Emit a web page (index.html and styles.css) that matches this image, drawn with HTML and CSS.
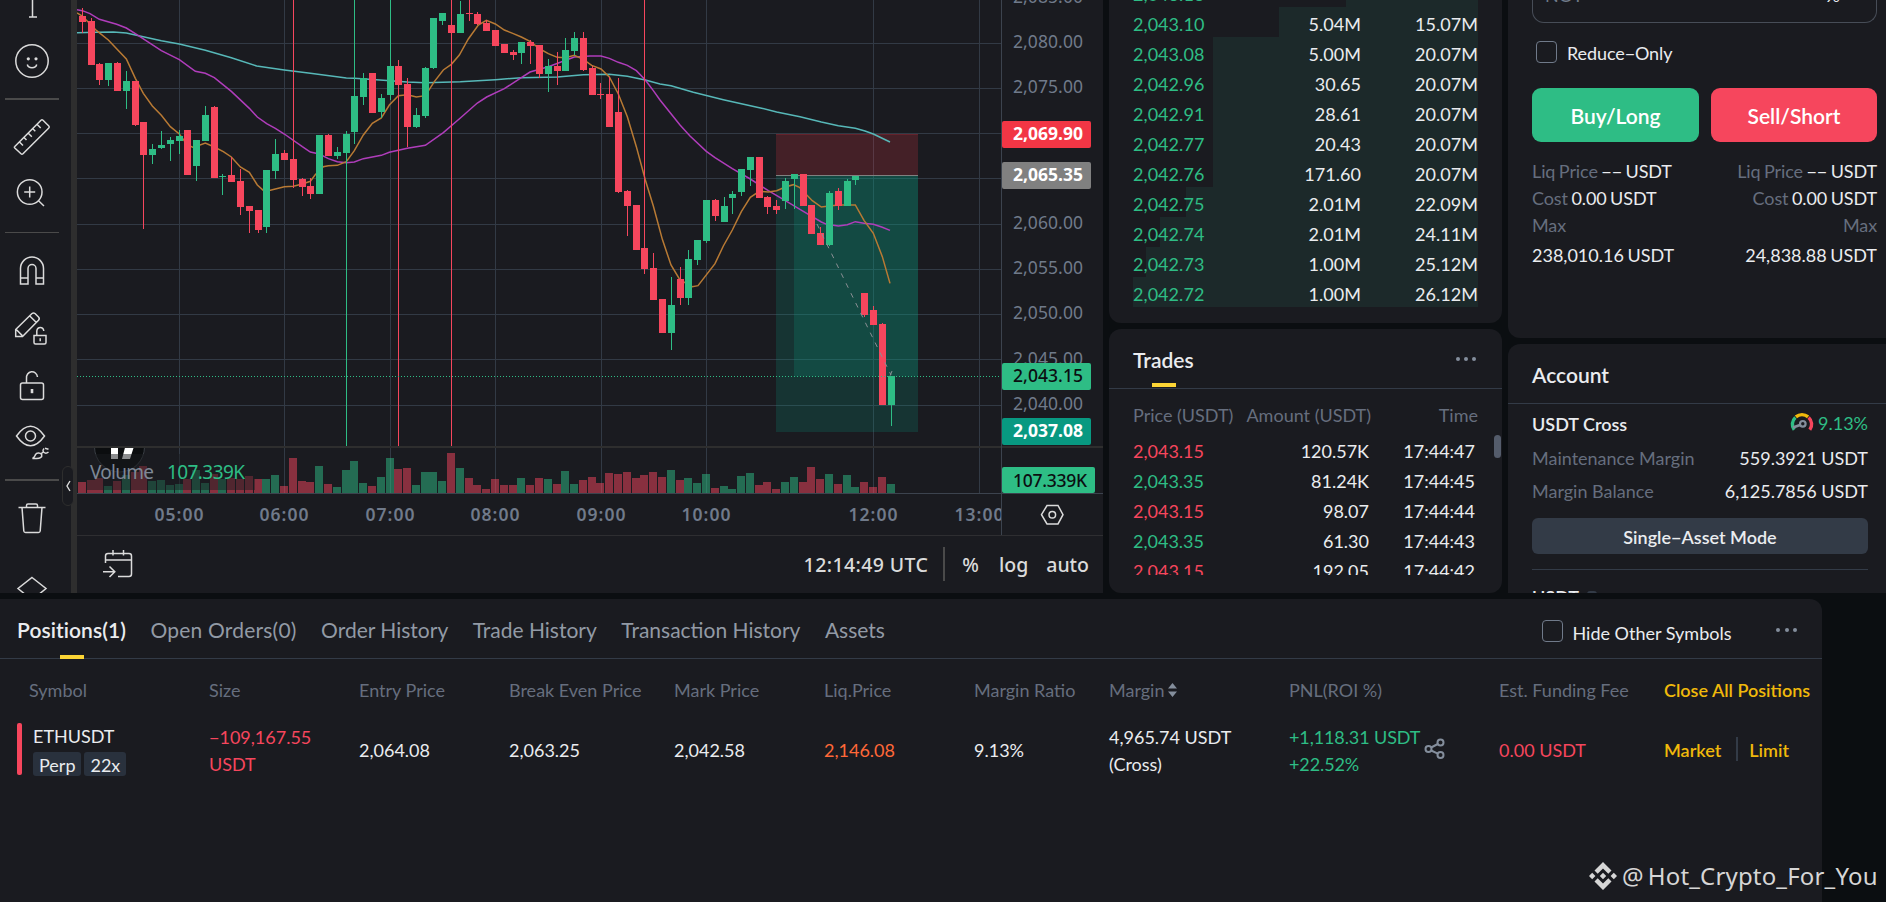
FILE: index.html
```html
<!DOCTYPE html>
<html lang="en">
<head>
  <meta charset="utf-8">
  <title>ETHUSDT Perp</title>
  <link rel="stylesheet" href="styles.css">
</head>
<body>

  <main class="terminal">
    <section class="chart-panel">
      <nav class="tools">
        <svg class="tool tool-top" width="40" height="33" viewBox="12 0 40 33"><path d="M32.500 0V17M29 17h8"/></svg>
        <svg class="tool" width="40" height="40" viewBox="12 41 40 40"><circle cx="32" cy="61" r="16.200"/><path d="M27.300 64.500c1 4.300 8.400 4.300 9.400 0"/><circle class="dot" cx="28.300" cy="58.800" r="1.600"/><circle class="dot" cx="36" cy="58.800" r="1.600"/></svg>
        <hr class="thick">
        <svg class="tool" width="40" height="40" viewBox="12 117 40 40"><path d="M14.800 146.500 41 120.200q1-1 2 0l5.800 5.800q1 1 0 2L23 153.800q-1 1-2 0l-6.200-5.800q-.8-.8 0-1.500zM19.500 142l3.500 3.500M24 137.500l2.500 2.500M28.300 133.200l3.500 3.500M32.800 128.700l2.500 2.500M37.200 124.500l3.500 3.500"/></svg>
        <svg class="tool" width="40" height="40" viewBox="12 172 40 40"><circle cx="29.700" cy="192" r="12.300"/><path d="M29.700 186.500v11M24.200 192h11M38.300 200.500l5.700 5.500"/></svg>
        <hr>
        <svg class="tool" width="40" height="40" viewBox="12 250 40 40"><path d="M20.500 284V268.500a11.500 11.500 0 0 1 23 0V284h-7.500V268.500a4 4 0 0 0-8 0V284zM20.500 278H28M36 278h7.500"/></svg>
        <svg class="tool" width="40" height="40" viewBox="12 309 40 40"><path d="M15.700 329.500 32 313.500q1.500-1.200 3 0l3.500 3.500q1.500 1.500 0 3.200L22.500 336.500H15.700zM16.500 329.800l5.800 5.800M29.800 316l6.300 6.300M34 335.500h12v7q0 1.500-1.500 1.500h-9q-1.500 0-1.500-1.500zM36.800 335v-4q.5-3.500 3.500-3.500t3.500 3.500M40.200 338.300v3"/></svg>
        <svg class="tool" width="40" height="40" viewBox="12 366 40 40"><rect x="20.500" y="383" width="23" height="16.500" rx="2"/><path d="M26.500 383v-4.500a5.500 6 0 0 1 11-1.500"/><path d="M32 389v4.200" class="bold"/></svg>
        <svg class="tool" width="40" height="40" viewBox="12 422 40 40"><path d="M16.500 436Q30.500 416.500 44.500 436 30.500 455.500 16.500 436zM32.500 458.500c2-1 2.200-2.200 3-3.800 1-2 4.500-2.300 6.200-.2.800 3-2.200 4-5 4zM41.500 453.500l2-2M44 448.500q-2 2.500 0 4t4.500-.5M45 448.300l3.500 1"/><circle cx="30.500" cy="436" r="5"/></svg>
        <hr class="thick">
        <svg class="tool" width="40" height="40" viewBox="12 498 40 40"><path d="M18.500 507.500h27M26.500 507.500v-2q0-1.500 1.500-1.500h8q1.500 0 1.500 1.500v2M22 507.500l1.800 23.500q.2 1.500 1.700 1.500h13q1.500 0 1.700-1.500l1.800-23.500"/></svg>
        <svg class="tool" width="40" height="40" viewBox="12 571 40 40"><path d="M32 577.500 46 588.500 32 600 18 588.500z"/></svg>
      </nav>
      <div class="splitter"><span class="handle"><svg width="6" height="12" viewBox="0 0 6 12"><path d="M5 1 2 6l3 5"/></svg></span></div>
      <div class="chart">
        <svg id="chart" width="1026" height="536" viewBox="77 0 1026 536"></svg>
        <div class="chart-bar">
          <svg class="tool goto" width="32" height="32" viewBox="102 547 32 32"><path d="M105.500 563v-7q0-2.500 2.500-2.500h21q2.500 0 2.500 2.500v18q0 2.500-2.500 2.500h-11M105.500 560h26M113 550v5.500M123.500 550v5.500M103 571.700h12M109.500 566.500l5.300 5.200-5.300 5.300"/></svg>
          <span class="clock">12:14:49 UTC</span>
          <span class="bar-sep"></span>
          <span class="pct">%</span>
          <span class="log">log</span>
          <span class="auto">auto</span>
        </div>
      </div>
    </section>

    <div class="col">
      <section class="card book" id="book"></section>
      <section class="card trades">
        <header class="card-head">
          <h2>Trades</h2>
          <span class="dots"><i></i><i></i><i></i></span>
        </header>
        <div class="trade-row trade-labels"><span>Price (USDT)</span><span>Amount (USDT)</span><span>Time</span></div>
        <div class="trade-list">
          <div class="trade-row"><span class="down">2,043.15</span><span>120.57K</span><span>17:44:47</span></div>
          <div class="trade-row"><span class="up">2,043.35</span><span>81.24K</span><span>17:44:45</span></div>
          <div class="trade-row"><span class="down">2,043.15</span><span>98.07</span><span>17:44:44</span></div>
          <div class="trade-row"><span class="up">2,043.35</span><span>61.30</span><span>17:44:43</span></div>
          <div class="trade-row"><span class="down">2,043.15</span><span>192.05</span><span>17:44:42</span></div>
        </div>
        <span class="thumb"></span>
      </section>
    </div>

    <div class="col">
      <section class="card order">
        <div class="field"><span>NOT</span><span class="unit">%</span></div>
        <label class="check reduce"><span class="box"></span>Reduce−Only</label>
        <div class="buttons">
          <button class="buy">Buy/Long</button>
          <button class="sell">Sell/Short</button>
        </div>
        <div class="estimates">
          <div>
            <p><em>Liq Price</em> −− USDT</p>
            <p><em>Cost</em> 0.00 USDT</p>
            <p><em>Max</em></p>
            <p class="max">238,010.16 USDT</p>
          </div>
          <div class="right">
            <p><em>Liq Price</em> −− USDT</p>
            <p><em>Cost</em> 0.00 USDT</p>
            <p><em>Max</em></p>
            <p class="max">24,838.88 USDT</p>
          </div>
        </div>
      </section>
      <section class="card account">
        <header class="card-head"><h2>Account</h2></header>
        <div class="account-body">
          <div class="line first"><b>USDT Cross</b>
            <span class="ratio"><svg width="24" height="22" viewBox="0 0 24 22"><path d="M4.200 17.800A9.300 9.300 0 0 1 5.400 5.400" stroke="#2ebd85"/><path d="M5.900 4.900a9.300 9.300 0 0 1 12.200 0" stroke="#f0b90b"/><path d="M18.600 5.400a9.300 9.300 0 0 1 1.200 12.400" stroke="#f6465d"/><circle cx="12.800" cy="11.800" r="2.800" stroke="#848e9c" stroke-width="2.200"/><path d="M10 13 3 15.500" stroke="#848e9c" stroke-width="2.800"/></svg>9.13%</span></div>
          <div class="line"><em>Maintenance Margin</em><span>559.3921 USDT</span></div>
          <div class="line"><em>Margin Balance</em><span>6,125.7856 USDT</span></div>
          <button class="mode">Single−Asset Mode</button>
          <div class="asset"><b>USDT</b><i></i></div>
        </div>
      </section>
    </div>
  </main>

  <section class="positions">
    <header class="tabs">
      <a class="active">Positions(1)</a>
      <a class="open">Open Orders(0)</a>
      <a>Order History</a>
      <a>Trade History</a>
      <a>Transaction History</a>
      <a>Assets</a>
      <label class="check hide"><span class="box"></span>Hide Other Symbols</label>
      <span class="dots"><i></i><i></i><i></i></span>
    </header>
    <div class="pos-grid pos-labels">
      <span>Symbol</span><span>Size</span><span>Entry Price</span><span>Break Even Price</span><span>Mark Price</span><span>Liq.Price</span><span>Margin Ratio</span>
      <span>Margin <svg width="9" height="14" viewBox="0 0 9 14"><path d="M4.500 0 9 5.500H0zM4.500 14 9 8.500H0z" fill="#848e9c"/></svg></span>
      <span>PNL(ROI %)</span><span>Est. Funding Fee</span><a>Close All Positions</a>
    </div>
    <div class="pos-grid pos-row">
      <div class="symbol"><span>ETHUSDT</span><div class="badges"><i>Perp</i><i>22x</i></div></div>
      <span class="down">−109,167.55<br>USDT</span>
      <span>2,064.08</span>
      <span>2,063.25</span>
      <span>2,042.58</span>
      <span class="warn">2,146.08</span>
      <span>9.13%</span>
      <span>4,965.74 USDT<br>(Cross)</span>
      <div class="pnl up"><span>+1,118.31 USDT<br>+22.52%</span>
        <svg width="22" height="22" viewBox="0 0 22 22"><circle cx="4.500" cy="11" r="3"/><circle cx="16.500" cy="4.500" r="3"/><circle cx="16.500" cy="17" r="3"/><path d="M7.200 9.500 13.800 6M7.200 12.500l6.600 3.200"/></svg></div>
      <span class="down">0.00 USDT</span>
      <div class="close"><a>Market</a><a>Limit</a></div>
    </div>
  </section>

  <div class="watermark">
    <svg width="28" height="28" viewBox="0 0 28 28"><path d="M14 0l8.500 8.500-3.200 3.200L14 6.400l-5.300 5.300-3.200-3.200zM3.200 10.800 6.400 14l-3.200 3.200L0 14zM24.800 10.800 28 14l-3.200 3.200L21.600 14zM14 10.800l3.200 3.200-3.200 3.200-3.200-3.200zM8.700 16.300l5.300 5.300 5.300-5.300 3.200 3.200L14 28l-8.500-8.500z"/></svg>
    <span>@</span><span class="handle-name">Hot_Crypto_For_You</span>
  </div>

  <script src="chart.js"></script>
</body>
</html>
```

FILE: styles.css
```css
* { box-sizing: border-box; }
body { margin: 0; height: 902px; overflow: hidden; background: #0b0e11; color: #eaecef; font: 18px/27px Lato, "Open Sans", sans-serif; position: relative; }
h2, p { margin: 0; }
em, i { font-style: normal; }
em { color: #666e7e; }
button { border: 0; padding: 0; font-family: inherit; color: #fff; }
.up { color: #2ebd85; }
.down { color: #f6465d; }

.terminal { display: grid; grid-template-columns: 1103px 393px 378px; gap: 6px; height: 593px; }
.col { display: flex; flex-direction: column; gap: 6px; height: 593px; }
.card { background: #1a1b20; border-radius: 12px; overflow: hidden; position: relative; }

/* chart */
.chart-panel { display: flex; background: #1a1b20; height: 593px; overflow: hidden; }
.tools { width: 71px; padding-right: 7px; display: grid; grid-template-rows: 33px 56px 20px 56px 54px 26px 50px 68px 46px 66px 10px 66px 80px; place-items: center; height: 593px; }
.tools hr { width: 54px; height: 1px; margin: 0; border: 0; background: #4a4a4a; }
.tools hr.thick { height: 2px; }
.tool { fill: none; stroke: #dbdbdb; stroke-width: 1.5; }
.tool .dot { fill: #dbdbdb; stroke: none; }
.tool .bold { stroke-width: 2.6; }
.splitter { width: 6px; background: #2e2e2e; position: relative; }
.handle { position: absolute; left: -9px; top: 466px; width: 12px; height: 40px; border: 1px solid #2e2e2e; border-radius: 6px; background: #1a1b20; display: flex; align-items: center; justify-content: center; }
.handle svg { fill: none; stroke: #dbdbdb; stroke-width: 1.4; flex: none; }
.chart { width: 1026px; }
.chart > svg { display: block; }
.chart text { font-family: "Noto Sans", sans-serif; font-size: 17.5px; fill: #707a8a; }
.chart-bar { height: 57px; padding: 0 15px 9px 25px; display: flex; align-items: center; font: 500 19.5px/24px "Noto Sans", sans-serif; color: #dbdbdb; }
.goto { margin-right: auto; margin-top: 5px; }
.bar-sep { width: 2px; height: 34px; background: #4a4a4a; margin: 7px 17px 0 15px; }
.clock { letter-spacing: 0.4px; }
.pct { margin-right: 20px; }
.log { margin-right: 18px; }
.auto { margin-right: -1px; }
.chart-bar span:not(.bar-sep) { margin-top: 9px; }

/* order book */
.book { height: 323px; padding: 0 24px 16px; border-radius: 0 0 12px 12px; display: flex; flex-direction: column; justify-content: flex-end; }
.book-row { flex: none; height: 30px; padding-top: 2px; line-height: 30px; position: relative; display: grid; grid-template-columns: 110px 118px 117px; text-align: right; }
.book-row span { position: relative; z-index: 1; letter-spacing: 0.05px; }
.book-row span:first-child { text-align: left; color: #2ebd85; }
.depth { position: absolute; right: 0; top: 0; height: 30px; background: #1c292a; }

/* trades */
.card-head { display: flex; align-items: center; justify-content: space-between; padding: 1px 24px 0; height: 60px; border-bottom: 1px solid #333b47; }
.card-head h2 { font-size: 21px; font-weight: 600; position: relative; }
.trades { height: 264px; }
.trades h2::after { content: ""; position: absolute; left: 19px; top: 37px; width: 24px; height: 4px; background: #fcd535; }
.dots { display: flex; gap: 4px; }
.dots i { width: 4px; height: 4px; border-radius: 50%; background: #848e9c; }
.trades .dots { padding-right: 2px; }
.trade-row { display: grid; grid-template-columns: 110px 126px 106px; height: 30px; line-height: 30px; text-align: right; padding-left: 24px; }
.trade-row span:first-child { text-align: left; }
.trade-labels { margin: 12px 0 5px; line-height: 29px; grid-template-columns: 106px 132px 107px; color: #666e7e; white-space: nowrap; }
.trade-list { height: 139px; overflow: hidden; }
.thumb { position: absolute; right: 1px; top: 106px; width: 7px; height: 23px; border-radius: 4px; background: #545c6b; }

/* order form */
.order { height: 338px; border-radius: 0 0 0 12px; padding: 0 9px 0 24px; }
.field { height: 23px; border: 1px solid #474d57; border-top: 0; border-radius: 0 0 12px 12px; display: flex; justify-content: space-between; padding: 0 36px 0 12px; line-height: 24px; color: #707a8a; overflow: hidden; }
.field span { margin-top: -17.5px; }
.field .unit { color: #eaecef; }
.check { display: flex; align-items: center; color: #eaecef; }
.box { width: 21px; height: 22px; border: 1px solid #707a8a; border-radius: 4px; }
.reduce { margin: 18px 0 0 4px; height: 24px; gap: 10px; line-height: 26px; letter-spacing: -0.1px; }
.check .box { position: relative; top: -1px; }
.buttons { display: grid; grid-template-columns: 167px 166px; gap: 12px; margin-top: 23px; }
.buttons button { height: 54px; border-radius: 9px; font-size: 21px; font-weight: 600; }
.buy { background: #2ebd85; }
.sell { background: #f6465d; }
.estimates { display: flex; justify-content: space-between; margin-top: 16px; letter-spacing: -0.1px; word-spacing: -1px; }
.estimates .right { text-align: right; }
.estimates .max { margin-top: 3px; letter-spacing: 0; }

/* account */
.account { height: 249px; border-radius: 12px 0 0 0; }
.account-body { padding: 1px 18px 0 24px; }
.line { display: flex; justify-content: space-between; height: 33px; line-height: 34px; }
.line.first { height: 36px; line-height: 38px; }
.line b, .asset b { font-weight: 600; }
.ratio { display: flex; align-items: center; gap: 4px; color: #2ebd85; }
.ratio svg { fill: none; stroke-width: 3.4; }
.mode { width: 336px; height: 36px; margin-top: 11px; border-radius: 6px; background: #333b47; color: #eaecef; font-size: 18px; font-weight: 600; line-height: 38px; display: block; }
.asset { margin-top: 15px; padding-top: 14px; border-top: 1px solid #333b47; display: flex; align-items: center; gap: 8px; }
.asset i { width: 10px; height: 14px; border-radius: 3px; background: #333b47; }

/* positions */
.positions { width: 1822px; height: 303px; margin-top: 6px; background: #1a1b20; border-radius: 0 12px 0 0; }
.tabs { height: 60px; border-bottom: 1px solid #333b47; padding-left: 17px; display: flex; align-items: center; gap: 24.5px; font-size: 21px; color: #929aa5; padding-top: 2px; }
.tabs a { position: relative; }
.tabs .active { color: #eaecef; font-weight: 600; letter-spacing: 0.08px; }
.tabs .active::after { content: ""; position: absolute; left: 43px; top: 39px; width: 24px; height: 4px; background: #fcd535; }
.tabs .open { letter-spacing: 0.2px; }
.hide { margin: 7px 0 0 auto; gap: 10px; font-size: 18px; }
.hide .box { top: -2px; }
.tabs .dots { margin: 0 25px 0 20px; gap: 4.5px; }
.pos-grid { display: grid; grid-template-columns: 180px 150px 150px 165px 150px 150px 135px 180px 210px 165px 150px; padding-left: 29px; align-items: center; white-space: nowrap; }
.pos-labels { color: #666e7e; height: 64px; padding-bottom: 2px; }
.pos-labels svg { margin-left: -1px; }
.pos-grid a { color: #f0b90b; font-weight: 600; }
.pos-row { height: 56px; padding-bottom: 2px; }
.symbol { position: relative; padding-left: 4px; height: 55px; display: flex; flex-direction: column; gap: 2px; }
.symbol::before { content: ""; position: absolute; left: -12px; top: 0; width: 5px; height: 52px; border-radius: 2px; background: #f6465d; }
.badges { display: flex; gap: 3px; }
.badges i { height: 24px; line-height: 27px; padding: 0 6px; border-radius: 3px; background: #29313d; }
.warn { color: #ff6838; }
.pnl { display: flex; align-items: center; gap: 4px; letter-spacing: -0.1px; }
.pnl svg { fill: none; stroke: #848e9c; stroke-width: 2; margin-top: -3px; }
.close { display: flex; }
.close a + a { margin-left: 15px; padding-left: 11px; border-left: 2px solid #333b47; height: 24px; }

.watermark { position: absolute; left: 1589px; top: 858px; display: flex; align-items: center; height: 36px; font: 24px/36px "Noto Sans", sans-serif; color: #d6d6d6; letter-spacing: 0.17px; }
.watermark svg { fill: #d6d6d6; margin-right: 5px; }
.handle-name { margin-left: 4px; white-space: nowrap; }
```

FILE: chart.js
```js
// chart data is kept in thirds of a pixel
const U = 3;
const UP = '#2ebd85', DOWN = '#f6465d', GRID = '#323a45';

// [up, high, top, bottom, low, volume top]
const candles = [
  [0,24,48,66,99,576],[0,54,63,195,195,570],[0,189,192,240,255,564],[1,189,189,240,258,588],[0,186,189,273,273,573],
  [1,213,243,273,327,555],[0,243,243,375,378,546],[0,366,366,465,687,528],[1,432,447,465,492,573],[1,393,435,444,447,570],
  [1,411,420,432,483,585],[1,390,408,423,462,582],[0,390,390,525,525,567],[1,420,420,498,543,540],[1,318,345,423,423,579],
  [0,318,321,534,534,552],[1,522,528,531,585,567],[0,471,525,546,546,564],[0,507,543,621,645,567],[0,618,618,633,699,558],
  [0,630,630,690,699,567],[1,510,510,681,699,567],[1,417,462,513,537,555],[0,450,459,480,480,588],[0,-9,477,540,564,504],
  [0,534,537,561,588,573],[0,534,558,582,597,576],[1,405,405,582,582,528],[0,402,405,468,468,582],[1,441,456,468,477,591],
  [1,393,402,459,1338,540],[1,-9,288,396,432,513],[1,219,234,291,315,579],[0,219,219,339,339,588],[1,282,294,336,354,561],
  [1,-9,198,285,300,504],[0,180,198,255,1338,537],[0,234,252,381,441,534],[1,324,345,381,384,585],[1,201,204,348,354,546],
  [1,54,54,204,207,546],[1,39,39,63,75,573],[0,-9,75,99,1338,489],[1,3,42,99,99,534],[0,-9,39,42,63,564],
  [0,36,42,72,75,585],[0,60,69,93,93,597],[0,90,90,138,138,567],[0,132,132,159,159,585],[0,150,156,165,180,585],
  [1,126,126,159,192,564],[0,120,126,138,192,585],[0,135,135,222,234,564],[1,177,198,222,276,567],[0,156,198,213,255,582],
  [1,114,150,213,213,543],[1,96,114,153,165,582],[0,96,114,210,213,570],[0,198,204,285,285,561],[0,249,282,285,297,579],
  [0,231,282,381,381,549],[0,234,336,576,579,552],[0,570,573,618,708,546],[0,615,615,750,750,564],[0,-9,744,807,822,555],
  [0,759,804,900,900,546],[0,897,897,999,999,561],[1,831,915,999,1050,540],[0,801,837,894,915,570],[1,750,777,894,915,564],
  [1,720,720,780,795,579],[1,600,600,723,729,552],[0,597,600,648,663,594],[1,591,618,666,666,588],[1,573,582,594,642,597],
  [1,507,507,576,588,558],[1,471,471,510,558,549],[0,471,471,594,594,585],[0,588,591,621,642,576],[0,600,618,630,642,597],
  [1,534,543,603,627,576],[1,522,522,537,627,561],[0,522,522,618,618,576],[0,615,615,702,702,531],[0,681,699,735,735,567],
  [1,573,579,735,738,552],[0,564,573,618,630,582],[1,537,543,618,618,555],[1,528,528,540,555,591],[0,879,879,945,951,576],
  [0,918,930,975,975,591],[0,969,972,1215,1215,561],[1,1128,1128,1215,1278,582]
];

const averages = [
  ['#57b8b8', '231,98 290,97 340,96 379,99 484,122 538,132 616,151 694,173 770,198 853,210 931,220 1039,234 1063,235 1150,241 1222,246 1276,248 1381,245 1486,239 1564,233 1672,231 1750,224 1828,223 1882,229 1936,240 1980,252 2013,257 2080,277 2170,299 2278,323 2330,336 2400,350 2464,366 2515,377 2566,385 2595,393 2620,402 2670,426'],
  ['#b03dbb', '231,29 247,32 270,41 298,58 350,73 379,84 406,101 484,152 538,179 586,214 616,220 643,233 694,274 748,325 772,351 800,371 826,385 853,402 907,440 931,456 958,462 985,476 1012,485 1039,488 1063,486 1090,476 1144,466 1168,457 1222,445 1276,436 1330,398 1381,354 1432,309 1460,291 1513,266 1564,233 1590,216 1645,200 1723,171 1770,168 1803,168 1828,175 1855,187 1882,196 1909,212 1936,240 1960,272 1980,300 2040,375 2070,408 2119,454 2145,473 2197,506 2251,537 2305,572 2356,602 2410,634 2464,666 2480,673 2515,678 2542,674 2566,665 2592,670 2620,673 2645,681 2670,691'],
  ['#b87a34', '231,39 247,48 290,92 325,120 379,177 406,235 430,280 457,318 484,346 511,380 538,402 562,435 580,442 616,429 643,441 670,455 694,471 721,501 748,517 772,555 794,575 826,567 853,560 880,559 907,552 931,544 945,525 970,500 985,497 1012,496 1039,485 1063,452 1090,405 1117,370 1144,354 1168,315 1195,287 1222,284 1249,291 1276,287 1303,245 1330,210 1354,193 1378,165 1405,117 1435,75 1459,61 1486,72 1513,90 1540,101 1564,111 1590,124 1620,147 1645,161 1672,172 1696,173 1723,166 1750,178 1775,196 1803,207 1828,231 1855,282 1882,350 1909,440 1936,540 1960,618 1987,718 2013,795 2040,840 2077,860 2094,857 2145,791 2170,738 2197,690 2224,635 2251,592 2278,574 2305,576 2330,572 2356,561 2380,554 2398,562 2437,602 2464,621 2488,618 2515,615 2566,615 2592,661 2620,700 2647,770 2670,850']
];

const rect = (x, y, w, h, fill, extra = '') => `<rect x="${x}" y="${y}" width="${w}" height="${h}" fill="${fill}" ${extra}/>`;
const line = (x1, y1, x2, y2, stroke, extra = '') => `<line x1="${x1}" y1="${y1}" x2="${x2}" y2="${y2}" stroke="${stroke}" ${extra}/>`;
const label = (x, y, text, width, style = '') => `<text x="${x}" y="${y}" textLength="${width}" style="${style}">${text}</text>`;
const barX = i => Math.floor(82.35 + i * 8.79);

let out = '';

// grid
[43.5, 88.5, 133.5, 178.5, 224.5, 269.5, 314.5, 359.5, 405.5].forEach(y => out += line(77, y, 1001, y, GRID));
const hours = [[179.5, '05:00'], [284.5, '06:00'], [390.5, '07:00'], [495.5, '08:00'], [601.5, '09:00'], [706.5, '10:00'], [873.5, '12:00'], [979.5, '13:00']];
hours.forEach(([x]) => out += line(x, 0, x, 493, GRID));

// short position
out += rect(776, 134, 142, 41.5, '#f23645', 'opacity=".2"') + line(776, 134.5, 918, 134.5, '#7a2630', 'opacity=".6"');
out += rect(776, 176, 142, 256, '#089981', 'opacity=".2"') + rect(794, 176, 124, 200.5, '#089981', 'opacity=".22"');
out += line(776, 175.5, 918, 175.5, '#808080');

// averages and candles
averages.forEach(([color, points]) => {
  out += `<polyline points="${points}" transform="scale(${1 / U})" fill="none" stroke="${color}" stroke-width="4.5"/>`;
});
candles.forEach(([up, high, top, bottom, low], i) => {
  const c = up ? UP : DOWN;
  out += rect(barX(i), high / U, 1, (low - high) / U, c);
  out += rect(barX(i) - 3, top / U, 7, (bottom - top) / U, c);
});
out += '<path d="M817 224 891 375M892 371l-2 5-2.500-3" fill="none" stroke="#8a8f94" stroke-dasharray="5 6"/>';
out += line(77, 376.5, 1001, 376.5, UP, 'stroke-dasharray="1 2"');

// volume pane
out += rect(77, 446, 1026, 2, '#2e2e2e');
candles.forEach(([up, , , , , vol], i) => {
  out += rect(barX(i) - 4, (vol + 870) / U, 8, (609 - vol) / U, up ? UP : DOWN, 'opacity=".5"');
});
out += '<clipPath id="pane"><rect x="77" y="448" width="924" height="45"/></clipPath>';
out += '<g clip-path="url(#pane)"><circle cx="119.500" cy="447" r="25" fill="#0b0d0f" stroke="#3a3f45"/><path d="M111 440h7v19h-7zM127 440h9l-6 19h-8z" fill="#fff"/></g>';
out += rect(86, 454, 169, 36, '#1a1b20', 'opacity=".5"');
out += label(90, 479, 'Volume', 64, 'font-size:19px;fill:#7e8896') + label(167, 479, '107.339K', 78, 'font-size:19px;fill:#2ebd85');

// axes
out += line(77, 493.5, 1103, 493.5, '#3c434e') + line(1001.5, 0, 1001.5, 535, '#3c434e') + line(77, 535.5, 1103, 535.5, '#2e2e31');
[['2,085.00', 3], ['2,080.00', 48], ['2,075.00', 93], ['2,060.00', 229], ['2,055.00', 274], ['2,050.00', 319], ['2,045.00', 365], ['2,040.00', 410]]
  .forEach(([t, y]) => out += label(1013, y, t, 70));
[['2,069.90', 121, '#f23645', '#fff', 700], ['2,065.35', 162, '#808080', '#fff', 700], ['2,043.15', 363, UP, '#0b0e11', 500], ['2,037.08', 418, '#089981', '#fff', 700]]
  .forEach(([t, y, bg, fg, w]) => out += rect(1002, y, 89, 27, bg, 'rx="2"') + label(1013, y + 19, t, 70, `fill:${fg};font-weight:${w}`));
out += rect(1002, 467, 93, 26, UP, 'rx="2"') + label(1013, 487, '107.339K', 74, 'fill:#0b0e11;font-weight:500');

out += '<clipPath id="times"><rect x="77" y="494" width="924" height="41"/></clipPath><g clip-path="url(#times)">';
hours.forEach(([x, t]) => out += label(x - 25, 521, t, 49, 'font-weight:600'));
out += '</g>';
out += '<path d="M1041.500 514.700l5.500-9.200h11l5 9.200-5 9.200h-11z" fill="none" stroke="#dbdbdb" stroke-width="1.500"/><circle cx="1052.300" cy="514.700" r="3.300" fill="none" stroke="#dbdbdb" stroke-width="1.500"/>';

document.getElementById('chart').innerHTML = out;

// order book, last value is the depth bar in px
const bids = [
  ['2,043.13', '', '', 132], ['2,043.10', '5.04M', '15.07M', 199], ['2,043.08', '5.00M', '20.07M', 265], ['2,042.96', '30.65', '20.07M', 265],
  ['2,042.91', '28.61', '20.07M', 265], ['2,042.77', '20.43', '20.07M', 265], ['2,042.76', '171.60', '20.07M', 265],
  ['2,042.75', '2.01M', '22.09M', 292], ['2,042.74', '2.01M', '24.11M', 318], ['2,042.73', '1.00M', '25.12M', 332], ['2,042.72', '1.00M', '26.12M', 345]
];
document.getElementById('book').innerHTML = bids.map(([price, amount, sum, depth]) =>
  `<div class="book-row"><span>${price}</span><span>${amount}</span><span>${sum}</span><div class="depth" style="width:${depth}px"></div></div>`
).join('');
```
